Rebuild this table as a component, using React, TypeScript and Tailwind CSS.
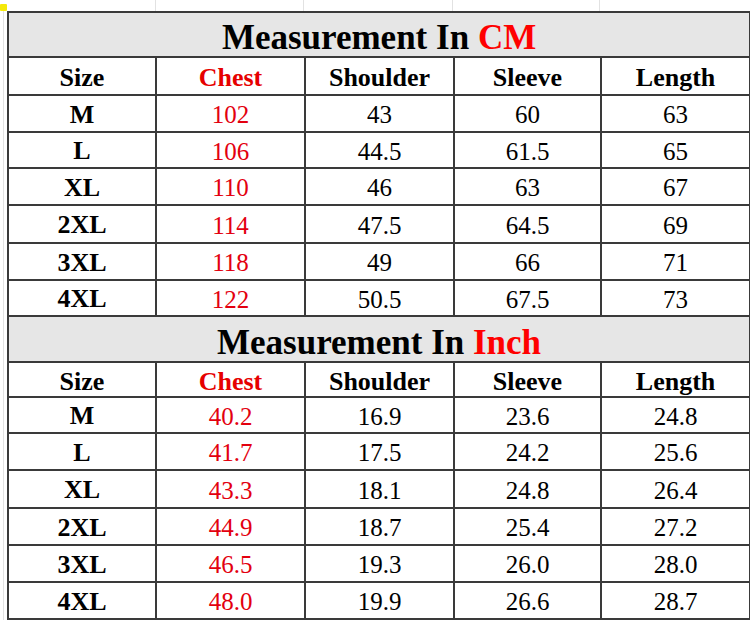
const cm = {
  title: "CM",
  heights: ["h-[38px]", "h-[37px]", "h-[36px]", "h-[37px]", "h-[38px]", "h-[37px]", "h-[36px]"],
  headH: "h-[45px]",
  rows: [
    ["M", "102", "43", "60", "63"],
    ["L", "106", "44.5", "61.5", "65"],
    ["XL", "110", "46", "63", "67"],
    ["2XL", "114", "47.5", "64.5", "69"],
    ["3XL", "118", "49", "66", "71"],
    ["4XL", "122", "50.5", "67.5", "73"],
  ],
};

const inch = {
  title: "Inch",
  heights: ["h-[35px]", "h-[36px]", "h-[37px]", "h-[38px]", "h-[37px]", "h-[37px]", "h-[37px]"],
  headH: "h-[46px]",
  rows: [
    ["M", "40.2", "16.9", "23.6", "24.8"],
    ["L", "41.7", "17.5", "24.2", "25.6"],
    ["XL", "43.3", "18.1", "24.8", "26.4"],
    ["2XL", "44.9", "18.7", "25.4", "27.2"],
    ["3XL", "46.5", "19.3", "26.0", "28.0"],
    ["4XL", "48.0", "19.9", "26.6", "28.7"],
  ],
};

const cell = "border-2 border-[#3a3a3a] text-center align-middle p-0 leading-none";

const Section = ({ data }: { data: typeof cm }) => (
  <>
    <tr>
      <td colSpan={5} className={`${cell} ${data.headH} bg-[#e6e6e6] text-[35px] font-bold pt-[6px]`}>
        Measurement In <span className="text-[#ff0000]">{data.title}</span>
      </td>
    </tr>
    <tr>
      <td className={`${cell} ${data.heights[0]} text-[26px] font-bold pt-[4px]`}>Size</td>
      <td className={`${cell} text-[26px] font-bold text-[#e60000] pt-[4px]`}>Chest</td>
      <td className={`${cell} text-[26px] font-bold pt-[4px]`}>Shoulder</td>
      <td className={`${cell} text-[26px] font-bold pt-[4px]`}>Sleeve</td>
      <td className={`${cell} text-[26px] font-bold pt-[4px]`}>Length</td>
    </tr>
    {data.rows.map((r, i) => (
      <tr key={r[0]}>
        <td className={`${cell} ${data.heights[i + 1]} text-[26px] font-bold pt-[2px]`}>{r[0]}</td>
        <td className={`${cell} text-[25px] text-[#e3000f] pt-[2px]`}>{r[1]}</td>
        <td className={`${cell} text-[25px] pt-[2px]`}>{r[2]}</td>
        <td className={`${cell} text-[25px] pt-[2px]`}>{r[3]}</td>
        <td className={`${cell} text-[25px] pt-[2px]`}>{r[4]}</td>
      </tr>
    ))}
  </>
);

export default function App() {
  return (
    <div className="relative w-[750px] h-[622px] bg-white overflow-hidden text-black [font-family:'Liberation_Serif','Times_New_Roman',serif]">
      {/* marker in the sheet corner */}
      <div className="absolute left-0 top-[4px] w-[7px] h-[7px] bg-[#f5e90a] rounded-[1px]" />
      <div className="flex h-[11px] pl-[7px]">
        <div className="w-[149px] border-r border-[#e2e2e2]" />
        <div className="w-[148px] border-r border-[#e2e2e2]" />
        <div className="w-[149px] border-r border-[#e2e2e2]" />
        <div className="w-[147px] border-r border-[#e2e2e2]" />
        <div className="flex-1" />
      </div>
      <div className="pl-[3px]">
        <div className="border-l border-[#e2e2e2] pl-[3px]">
          <table className="table-fixed border-collapse w-[742px]">
            <colgroup>
              <col className="w-[148px]" />
              <col className="w-[149px]" />
              <col className="w-[149px]" />
              <col className="w-[147px]" />
              <col className="w-[149px]" />
            </colgroup>
            <tbody>
              <Section data={cm} />
              <Section data={inch} />
            </tbody>
          </table>
        </div>
      </div>
    </div>
  );
}
